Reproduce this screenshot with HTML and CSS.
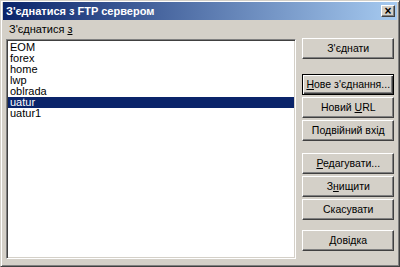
FILE: index.html
```html
<!DOCTYPE html>
<html>
<head>
    <meta name="viewport" content="width=device-width, initial-scale=1">
    <link rel="stylesheet" href="styles.css">
</head>

<body>
    <div class="window">
        <div class="titlebar">
            <span class="title">З'єднатися з FTP сервером</span>
            <span class="close">×</span>
        </div>

        <div class="content">
            <div class="left">
                <div class="label">З'єднатися <u>з</u></div>
                <ul class="list">
                    <li>EOM</li>
                    <li>forex</li>
                    <li>home</li>
                    <li>lwp</li>
                    <li>oblrada</li>
                    <li class="selected">uatur</li>
                    <li>uatur1</li>
                </ul>
            </div>

            <div class="buttons">
                <div class="btn">З'єднати</div>

                <div class="group">
                    <div class="btn default"><u>Н</u>ове з'єднання...</div>
                    <div class="btn">Новий <u>U</u>RL</div>
                    <div class="btn">Подвійний вхід</div>
                </div>

                <div class="group second">
                    <div class="btn"><u>Р</u>едагувати...</div>
                    <div class="btn">З<u>н</u>ищити</div>
                    <div class="btn">Скасувати</div>
                </div>

                <div class="group last">
                    <div class="btn">Довідка</div>
                </div>
            </div>
        </div>
    </div>
</body>
</html>
```

FILE: styles.css
```css
body {
    margin: 0;
    font-family: "Liberation Sans", Arial, sans-serif;
    font-size: 11px;
}

/* Окно диалога в классическом стиле */
.window {
    width: 400px;
    height: 267px;
    box-sizing: border-box;
    background: #d4d0c8;
    border: 1px solid;
    border-color: #d4d0c8 #404040 #404040 #d4d0c8;
    box-shadow: inset 1px 1px 0 #fff, inset -1px -1px 0 #808080;
    padding: 1px 2px 2px 2px;
}

.titlebar {
    height: 18px;
    display: flex;
    align-items: center;
    justify-content: space-between;
    padding: 0 2px 0 3px;
    background: linear-gradient(to right, #0a246a, #a6caf0);
    color: #fff;
    font-weight: bold;
}

.close {
    width: 14px;
    height: 12px;
    box-sizing: border-box;
    background: #d4d0c8;
    color: #000;
    font-size: 12px;
    line-height: 10px;
    text-align: center;
    border: 1px solid;
    border-color: #fff #404040 #404040 #fff;
    box-shadow: inset -1px -1px 0 #808080;
}

.content {
    display: flex;
    padding: 0 3px 0 3px;
}

.left {
    width: 292px;
}

.label {
    padding: 3px 0 0 3px;
    height: 14px;
}

.list {
    list-style: none;
    margin: 2px 0 0 0;
    padding: 1px 0;
    height: 220px;
    box-sizing: border-box;
    background: #fff;
    border: 1px solid;
    border-color: #808080 #fff #fff #808080;
    box-shadow: inset 1px 1px 0 #404040, inset -1px -1px 0 #d4d0c8;
}

.list li {
    height: 11px;
    line-height: 11px;
    padding-left: 2px;
    margin: 0 1px;
}

.list li:first-child {
    margin-top: 1px;
}

.list .selected {
    background: #0a246a;
    color: #fff;
}

.buttons {
    margin-left: 6px;
    padding-top: 18px;
    width: 92px;
}

.group {
    margin-top: 15px;
}

.group.second {
    margin-top: 12px;
}

.group.last {
    margin-top: 10px;
}

.btn {
    height: 21px;
    box-sizing: border-box;
    margin-bottom: 2px;
    text-align: center;
    font-size: 10.5px;
    line-height: 19px;
    border: 1px solid;
    border-color: #fff #404040 #404040 #fff;
    box-shadow: inset -1px -1px 0 #808080;
}

.btn.default {
    border-color: #000;
    box-shadow: inset 1px 1px 0 #fff, inset -1px -1px 0 #404040, inset -2px -2px 0 #808080;
}
```
